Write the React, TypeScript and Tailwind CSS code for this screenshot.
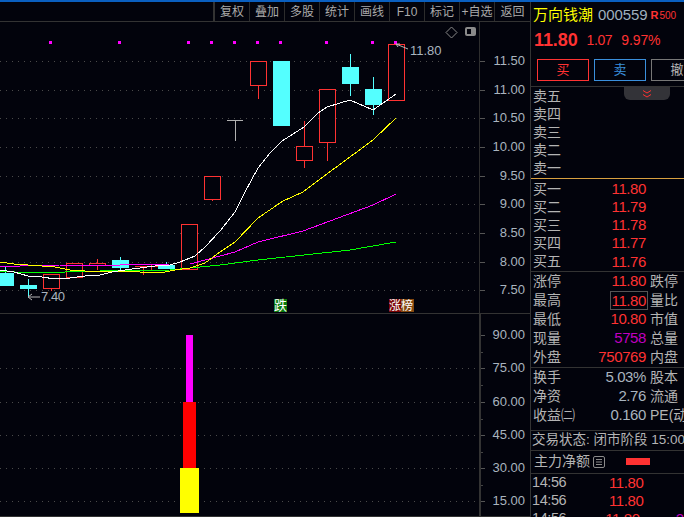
const tools = ["复权", "叠加", "多股", "统计", "画线", "F10", "标记", "+自选", "返回"];
const FONT = "[font-family:'Liberation_Sans','Noto_Sans_CJK_SC',sans-serif]";

type Candle = [number, number, number, number, number, "r" | "c"];
// x, bodyTop, bodyBottom, wickTop, wickBottom, kind
const candles: Candle[] = [
  [-3, 273, 286, 266, 286, "c"],
  [20, 285, 289, 279, 297, "c"],
  [43, 274, 288, 274, 291, "r"],
  [66, 263, 277, 263, 277, "r"],
  [89, 263, 265, 259, 270, "r"],
  [112, 260, 268, 257, 270, "c"],
  [135, 266, 266, 266, 275, "r"],
  [143, 265, 265, 265, 270, "r"],
  [158, 265, 269, 262, 269, "c"],
  [181, 224, 269, 224, 269, "r"],
  [204, 176, 199, 176, 201, "r"],
  [250, 61, 85, 61, 99, "r"],
  [273, 61, 126, 61, 126, "c"],
  [296, 146, 160, 121, 168, "r"],
  [319, 89, 142, 89, 161, "r"],
  [342, 67, 84, 54, 96, "c"],
  [365, 89, 105, 77, 115, "c"],
  [388, 44, 100, 44, 100, "r"],
];

const white = "0,270 14,272 28,276 42,277 55,279 70,278 85,276 100,275 112,272 125,270 140,268 155,266 170,265 180,262 195,256 205,247 220,231 235,212 245,192 258,168 270,153 282,141 304,127 318,113 327,107 350,100 373,110 396,94";
const yellow = "0,262 14,264 28,265 42,266 55,267 70,270 85,271 100,272 120,271 140,272 165,272 175,270 190,268 205,263 220,252 235,242 258,218 283,201 303,192 335,168 373,140 396,118";
const magenta = "0,266 20,266 60,265 120,265 170,264 190,264 205,260 220,256 235,252 258,242 303,231 373,205 396,194";
const green = "0,271 30,273 100,271 170,270 190,268 220,265 258,260 304,255 350,250 396,242";

const upperGrid = [61, 90, 118, 147, 176, 204, 233, 262, 290];
const upperLabels = ["11.50", "11.00", "10.50", "10.00", "9.50", "9.00", "8.50", "8.00", "7.50"];
const dots = [50, 119, 188, 211, 234, 257, 280, 326, 372, 395];
const lowerGrid = [335, 368, 402, 435, 468, 501];
const lowerLabels = ["90.00", "75.00", "60.00", "45.00", "30.00", "15.00"];

function UpperChart() {
  return (
    <svg width="530" height="291" viewBox="0 22 530 291" className="block">
      {upperGrid.map((y) => (
        <line key={y} x1="0" x2="479" y1={y + 0.5} y2={y + 0.5} stroke="#4a4a4a" strokeDasharray="1 5" />
      ))}
      <line x1="479.5" x2="479.5" y1="22" y2="313" stroke="#2e2e2e" />
      {upperGrid.map((y, i) => (
        <g key={y}>
          <line x1="480" x2="485" y1={y + 0.5} y2={y + 0.5} stroke="#555" />
          <text x="525" y={y + 4} textAnchor="end" fontSize="13" fill="#a9b4bf">{upperLabels[i]}</text>
        </g>
      ))}
      {dots.map((x) => (
        <rect key={x} x={x - 1} y="41" width="3" height="3" fill="#ff00ff" />
      ))}
      <g shapeRendering="crispEdges">
        {candles.map(([x, t, b, wt, wb, k]) => {
          const c = k === "r" ? "#ff3232" : "#54ffff";
          const mid = x + 8.5;
          if (x === 135)
            return <g key={x}><line x1="135" x2="158" y1="266.5" y2="266.5" stroke={c} /><line x1="143.5" x2="143.5" y1="266" y2="275" stroke={c} /></g>;
          if (x === 143) return <line key={x} x1="151.5" x2="151.5" y1="265" y2="270" stroke={c} />;
          return (
            <g key={x}>
              <line x1={mid} x2={mid} y1={wt} y2={wb} stroke={c} />
              {k === "r" ? (
                <rect x={x + 0.5} y={t + 0.5} width="16" height={b - t} fill="#02030c" stroke={c} />
              ) : (
                <rect x={x} y={t} width="17" height={b - t} fill={c} />
              )}
            </g>
          );
        })}
        <line x1="227" x2="243" y1="120.5" y2="120.5" stroke="#b0b0b0" />
        <line x1="235.5" x2="235.5" y1="120" y2="141" stroke="#b0b0b0" />
        <polyline points={green} fill="none" stroke="#00ff00" />
        <polyline points={magenta} fill="none" stroke="#ff00ff" />
        <polyline points={yellow} fill="none" stroke="#ffff00" />
        <polyline points={white} fill="none" stroke="#ffffff" />
      </g>
      {/* highest / lowest markers */}
      <path d="M396 44 L408 49 M396 44 l4 0 M396 44 l2 3" stroke="#b5b5b5" fill="none" />
      <text x="410" y="55" fontSize="13" fill="#a9b4bf">11.80</text>
      <path d="M28 297 H40 M28 297 l4 -3 M28 297 l4 3" stroke="#b5b5b5" fill="none" />
      <text x="41" y="301" fontSize="13" letterSpacing="-0.4" fill="#a9b4bf">7.40</text>
      {/* top-right small icons */}
      <path d="M451.5 27 L457 32.5 L451.5 38 L446 32.5 Z" fill="none" stroke="#8a8a8a" />
      <rect x="465" y="27" width="11" height="9" rx="2" fill="#8a8a8a" />
      <rect x="467" y="29" width="4" height="5" fill="#02030c" />
      {/* tags */}
      <rect x="274" y="299" width="13" height="13" fill="#0b7a0b" />
      <text x="274" y="310" fontSize="13" fill="#fff">跌</text>
      <rect x="389" y="299" width="12" height="13" fill="#7a0505" />
      <text x="389" y="310" fontSize="12" fill="#fff">涨</text>
      <rect x="401" y="299" width="13" height="13" fill="#84480f" />
      <text x="401" y="310" fontSize="12" fill="#fff">榜</text>
    </svg>
  );
}

function LowerChart() {
  return (
    <svg width="530" height="202" viewBox="0 314 530 202" className="block">
      {lowerGrid.slice(1).map((y) => (
        <line key={y} x1="0" x2="478" y1={y + 0.5} y2={y + 0.5} stroke="#4a4a4a" strokeDasharray="1 5" />
      ))}
      <rect x="186" y="335" width="7" height="67" fill="#ff00ff" />
      <rect x="183" y="402" width="13" height="66" fill="#ff0000" />
      <rect x="180" y="468" width="19" height="45" fill="#ffff00" />
      <rect x="479" y="314" width="2" height="202" fill="#333" />
      {lowerGrid.map((y, i) => (
        <g key={y}>
          <line x1="481" x2="485" y1={y + 0.5} y2={y + 0.5} stroke="#555" />
          <line x1="481" x2="483" y1={y + 17.5} y2={y + 17.5} stroke="#444" />
          <text x="525" y={y + 4} textAnchor="end" fontSize="13" fill="#a9b4bf">{lowerLabels[i]}</text>
        </g>
      ))}
    </svg>
  );
}

const RED = "text-[#ff3232]";

function Quote({ label, value, tone = RED }: { label: string; value?: string; tone?: string }) {
  return (
    <div className="flex h-[18.2px] items-center pl-[2px]">
      <span className="w-[60px] text-[14px] text-[#b4b4b4]">{label}</span>
      <span className={`w-[53px] text-right text-[15px] tracking-[-0.4px] ${tone}`}>{value}</span>
    </div>
  );
}

function Stat({ label, value, side, tone = RED, boxed }: { label: string; value: string; side: string; tone?: string; boxed?: boolean }) {
  return (
    <div className="flex h-[19px] items-center pl-[2px]">
      <span className="w-[60px] shrink-0 text-[14px] whitespace-nowrap text-[#b4b4b4]">{label}</span>
      <span className="flex w-[53px] shrink-0 justify-end">
        <span className={`text-[15px] tracking-[-0.4px] whitespace-nowrap ${tone} ${boxed ? "-mr-[2px] h-[19px] w-[38px] border border-[#555] pr-px text-right leading-[17px]" : ""}`}>{value}</span>
      </span>
      <span className="ml-[4px] shrink-0 text-[14px] whitespace-nowrap text-[#b4b4b4]">{side}</span>
    </div>
  );
}

function Trade({ time, price, vol }: { time: string; price: string; vol?: string }) {
  return (
    <div className="flex h-[18px] items-center pl-[1px]">
      <span className="w-[77px] text-[14.5px] tracking-[-0.4px] text-[#b4b4b4]">{time}</span>
      <span className={`text-[15px] tracking-[-0.4px] ${RED}`}>{price}</span>
      {vol && <span className="ml-[36px] text-[15px] text-[#c000c0]">{vol}</span>}
    </div>
  );
}

export default function App() {
  return (
    <div className={`flex h-[517px] w-[684px] flex-col overflow-hidden bg-[#02030c] ${FONT}`}>
      <div className="h-[2px] shrink-0 bg-[#0a5fc0]" />
      <div className="flex min-h-0 flex-1">
        <div className="flex w-[530px] shrink-0 flex-col">
          <div className="flex h-[20px] shrink-0 justify-end border-b border-[#333]">
            <div className="flex border-l-2 border-[#333]">
              {tools.map((t) => (
                <div key={t} className="flex w-[35px] items-center justify-center border-r border-[#2c2c2c] text-[12px] whitespace-nowrap text-[#aaaaaa] last:border-r-0">
                  {t}
                </div>
              ))}
            </div>
          </div>
          <UpperChart />
          <div className="h-px shrink-0 bg-[#333]" />
          <LowerChart />
          <div className="h-px shrink-0 bg-[#333]" />
        </div>
        <div className="relative flex min-w-0 flex-1 flex-col border-l border-[#333]">
          <div className="flex h-[27px] shrink-0 items-center pl-[2px] whitespace-nowrap">
            <span className="text-[15px] text-[#ffff00]">万向钱潮</span>
            <span className="ml-[5px] text-[15px] tracking-[-0.1px] text-[#9fb0bf]">000559</span>
            <span className="ml-[3px] text-[11px] font-bold text-[#ff3232]">R</span>
            <span className="ml-px text-[10px] text-[#ff3232]">500</span>
          </div>
          <div className={`flex h-[23px] shrink-0 items-center pl-[3px] whitespace-nowrap ${RED}`}>
            <span className="text-[18px] font-bold tracking-[-0.1px]">11.80</span>
            <span className="ml-[9px] text-[14px] tracking-[-0.4px]">1.07</span>
            <span className="ml-[9px] text-[14px] tracking-[-0.1px]">9.97%</span>
          </div>
          <div className="flex h-[35px] shrink-0 gap-[5px] border-b border-[#333] pt-[7px] pl-[6px]">
            <div className={`flex h-[22px] w-[52px] shrink-0 items-center justify-center border border-[#ff3232] text-[13px] ${RED}`}>买</div>
            <div className="flex h-[22px] w-[52px] shrink-0 items-center justify-center border border-[#3a8fdc] text-[13px] text-[#3a8fdc]">卖</div>
            <div className="flex h-[22px] w-[52px] shrink-0 items-center justify-center border border-[#777] text-[13px] text-[#b4b4b4]">撤</div>
          </div>
          <div className="absolute top-[85px] left-[93px] flex h-[13px] w-[46px] items-center justify-center rounded-b-md bg-[#333338]">
            <svg width="10" height="8" viewBox="0 0 10 8" fill="none" stroke="#ff3232">
              <path d="M1 0.5 L5 3 L9 0.5 M1 4.5 L5 7 L9 4.5" />
            </svg>
          </div>
          <div className="flex shrink-0 flex-col border-b border-[#d8a040]">
            {["卖五", "卖四", "卖三", "卖二", "卖一"].map((l) => (
              <Quote key={l} label={l} />
            ))}
          </div>
          <div className="flex shrink-0 flex-col border-b border-[#333] pt-[1px]">
            {[["买一", "11.80"], ["买二", "11.79"], ["买三", "11.78"], ["买四", "11.77"], ["买五", "11.76"]].map(([l, v]) => (
              <Quote key={l} label={l} value={v} />
            ))}
          </div>
          <div className="flex shrink-0 flex-col border-b border-[#333]">
            <Stat label="涨停" value="11.80" side="跌停" />
            <Stat label="最高" value="11.80" side="量比" boxed />
            <Stat label="最低" value="10.80" side="市值" />
            <Stat label="现量" value="5758" side="总量" tone="text-[#c000c0]" />
            <Stat label="外盘" value="750769" side="内盘" />
          </div>
          <div className="flex h-[63px] shrink-0 flex-col border-b border-[#333]">
            <Stat label="换手" value="5.03%" side="股本" tone="text-[#a9b4bf]" />
            <Stat label="净资" value="2.76" side="流通" tone="text-[#a9b4bf]" />
            <Stat label="收益㈡" value="0.160" side="PE(动" tone="text-[#a9b4bf]" />
          </div>
          <div className="flex h-[20px] shrink-0 items-center border-b border-[#333] pl-[1px] text-[13.5px] whitespace-nowrap text-[#b4b4b4]">
            交易状态: 闭市阶段 15:00
          </div>
          <div className="flex h-[23px] shrink-0 items-center border-b border-[#333] pl-[3px]">
            <span className="text-[14px] whitespace-nowrap text-[#b4b4b4]">主力净额</span>
            <svg width="12" height="12" viewBox="0 0 12 12" className="ml-[3px]" fill="none" stroke="#8a8a8a">
              <rect x="0.5" y="0.5" width="11" height="11" rx="1.5" />
              <path d="M3 3.5H9M3 6H9M3 8.5H9" />
            </svg>
            <div className="ml-[21px] h-[7px] w-[24px] bg-[#ff3232]" />
          </div>
          <Trade time="14:56" price="11.80" />
          <Trade time="14:56" price="11.80" />
          <Trade time="14:56" price="11.80" vol="2" />
        </div>
      </div>
    </div>
  );
}
